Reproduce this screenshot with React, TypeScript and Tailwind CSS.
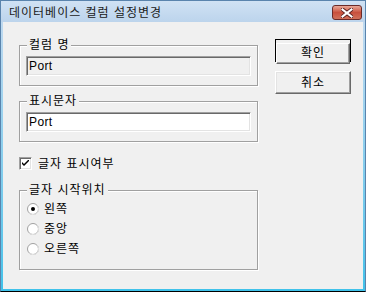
import React, { useState } from 'react';

const font = "font-['Liberation_Sans','Noto_Sans_CJK_KR',sans-serif]";

const GroupBox: React.FC<{ label: string; className?: string; children?: React.ReactNode }> = ({ label, className = '', children }) => (
  <div className={`relative border border-[#a0a0a0] shadow-[inset_1px_1px_0_#fff,1px_1px_0_#fff] ${className}`}>
    <span className="absolute left-[7px] top-[-8px] px-[2px] bg-[#f0f0f0] text-[12px] leading-[14px] tracking-[1px] text-black">{label}</span>
    {children}
  </div>
);

const TextBox: React.FC<{ value: string; readOnly?: boolean }> = ({ value, readOnly }) => (
  <div
    className={`h-[20px] border border-t-[#a0a0a0] border-l-[#a0a0a0] border-b-white border-r-white shadow-[inset_1px_1px_0_#696969,inset_-1px_-1px_0_#e3e3e3] pl-[2px] text-[12px] leading-[18px] tracking-[0.4px] text-black ${
      readOnly ? 'bg-[#f0f0f0]' : 'bg-white'
    }`}
  >
    {value}
  </div>
);

const Radio: React.FC<{ checked: boolean; label: string; onClick: () => void }> = ({ checked, label, onClick }) => (
  <div className="flex items-center h-[20px] cursor-default" onClick={onClick}>
    <svg width="12" height="12" viewBox="0 0 12 12" className="ml-[7px]">
      <circle cx="6" cy="6" r="5.5" fill="#fff" stroke="#a0a0a0" />
      <path d="M10 2.2 A5 5 0 0 1 2.2 10" fill="none" stroke="#e3e3e3" />
      {checked && <circle cx="6" cy="6" r="2" fill="#000" />}
    </svg>
    <span className="ml-[5px] text-[12px] leading-[14px] tracking-[1px]">{label}</span>
  </div>
);

const App: React.FC = () => {
  const [pos, setPos] = useState(0);
  const [show, setShow] = useState(true);

  return (
    <div className={`w-[366px] h-[292px] flex flex-col bg-gradient-to-b from-[#c6dbf0] to-[#3fc2ea] border border-[#5a84ad] border-b-black ${font}`}>
      {/* title bar */}
      <div className="h-[21px] flex items-center justify-between bg-gradient-to-b from-[#d0e2f4] to-[#bcd4ec] pl-[8px] pr-[3px]">
        <span className="mt-[2px] text-[12px] leading-[14px] text-[#1a1a1a] tracking-[1px]">데이터베이스 컬럼 설정변경</span>
        <div className="w-[30px] h-[15px] mt-[2px] rounded-[3px] border border-[#6a2a28] bg-gradient-to-b from-[#e8a898] via-[#c9503d] to-[#d0705a] flex items-center justify-center">
          <svg width="12" height="10" viewBox="0 0 12 10">
            <path d="M1.5 1.5 L10.5 8.5 M10.5 1.5 L1.5 8.5" stroke="#5a2020" strokeWidth="4" strokeLinecap="square" />
            <path d="M1.5 1.5 L10.5 8.5 M10.5 1.5 L1.5 8.5" stroke="#fff" strokeWidth="2.2" strokeLinecap="square" />
          </svg>
        </div>
      </div>

      {/* client area */}
      <div className="flex-1 mx-[2px] mb-[2px] bg-[#f0f0f0] flex text-black">
        <div className="w-[239px] ml-[16px] flex flex-col">
          <GroupBox label="컬럼 명" className="mt-[23px] h-[41px] px-[6px] pt-[10px]">
            <TextBox value="Port" readOnly />
          </GroupBox>

          <GroupBox label="표시문자" className="mt-[15px] h-[41px] px-[6px] pt-[10px]">
            <TextBox value="Port" />
          </GroupBox>

          <div className="mt-[15px] h-[13px] flex items-center cursor-default" onClick={() => setShow(!show)}>
            <div className="w-[13px] h-[13px] bg-white border border-t-[#a0a0a0] border-l-[#a0a0a0] border-b-white border-r-white shadow-[inset_1px_1px_0_#696969,inset_-1px_-1px_0_#e3e3e3] flex items-center justify-center">
              {show && (
                <svg width="7" height="7" viewBox="0 0 7 7">
                  <path d="M0 2 L0 4 L2 6 L7 1 L7 -1 L2 4 Z" fill="#000" />
                </svg>
              )}
            </div>
            <span className="ml-[6px] text-[12px] leading-[14px] tracking-[1px]">글자 표시여부</span>
          </div>

          <GroupBox label="글자 시작위치" className="mt-[20px] h-[80px] pt-[8px]">
            <Radio checked={pos === 0} label="왼쪽" onClick={() => setPos(0)} />
            <Radio checked={pos === 1} label="중앙" onClick={() => setPos(1)} />
            <Radio checked={pos === 2} label="오른쪽" onClick={() => setPos(2)} />
          </GroupBox>
        </div>

        <div className="ml-[17px] mt-[17px] flex flex-col gap-[9px]">
          <div className="w-[76px] h-[23px] border border-black">
            <button className="w-full h-full bg-[#f0f0f0] border border-t-white border-l-white border-r-[#696969] border-b-[#696969] shadow-[inset_-1px_-1px_0_#a0a0a0] text-[12px] leading-[14px] tracking-[1px]">
              확인
            </button>
          </div>
          <button className="w-[76px] h-[23px] bg-[#f0f0f0] border border-t-white border-l-white border-r-[#696969] border-b-[#696969] shadow-[inset_-1px_-1px_0_#a0a0a0,inset_1px_1px_0_#e3e3e3] text-[12px] leading-[14px] tracking-[1px]">
            취소
          </button>
        </div>
      </div>
    </div>
  );
};

export default App;
